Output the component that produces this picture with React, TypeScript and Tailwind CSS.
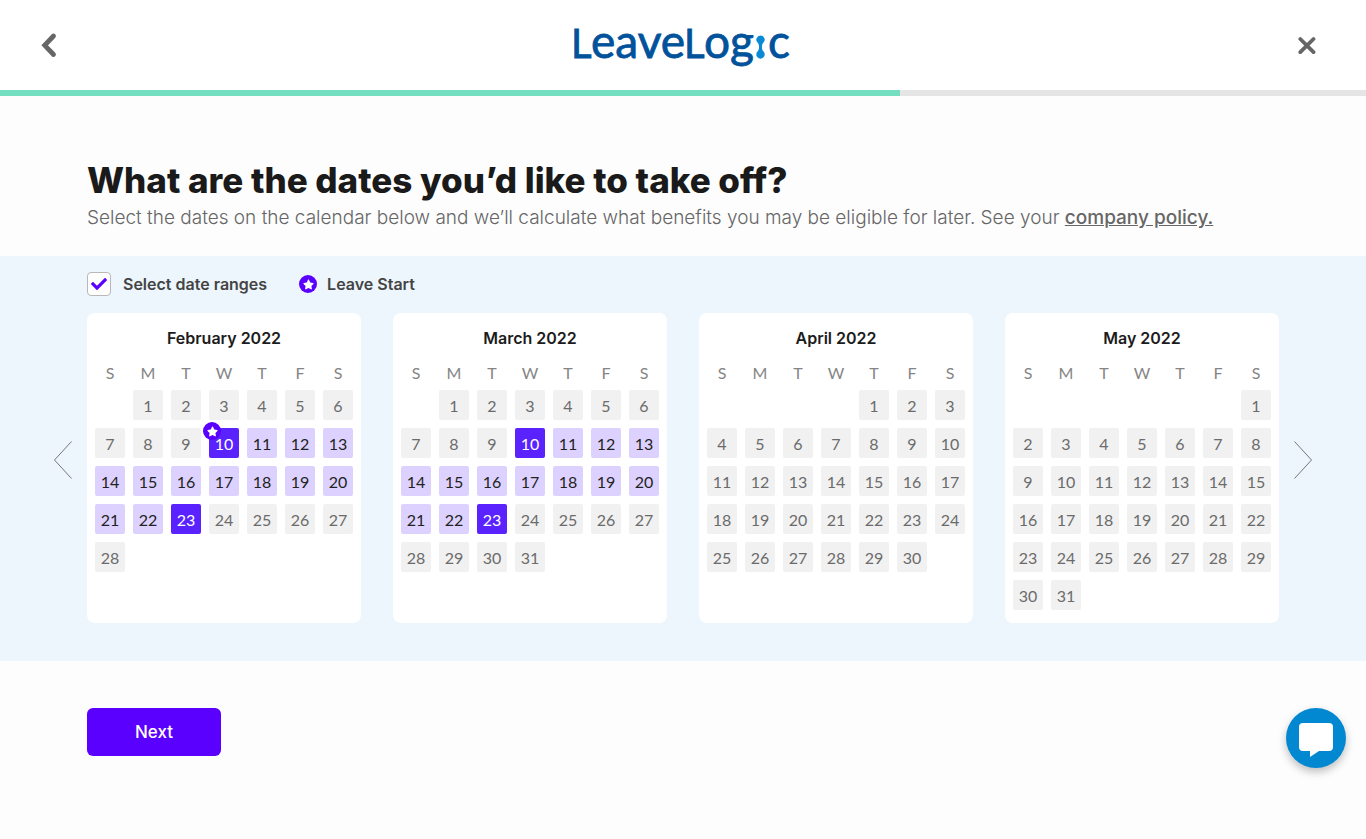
import React, { useState } from 'react';
import { FaCheck, FaStar } from 'react-icons/fa';

interface Month {
  name: string;
  offset: number;
  days: number;
  range?: [number, number];
  leaveStart?: number;
}

const months: Month[] = [
  { name: 'February 2022', offset: 1, days: 28, range: [10, 23], leaveStart: 10 },
  { name: 'March 2022', offset: 1, days: 31, range: [10, 23] },
  { name: 'April 2022', offset: 4, days: 30 },
  { name: 'May 2022', offset: 6, days: 31 },
];

const weekdays = ['S', 'M', 'T', 'W', 'T', 'F', 'S'];

const StarBadge: React.FC<{ className?: string }> = ({ className = '' }) => (
  <span className={`flex h-[18px] w-[18px] items-center justify-center rounded-full bg-[#5a00ff] text-white ${className}`}>
    <FaStar size={11} />
  </span>
);

const Logo: React.FC = () => (
  <svg width="232" height="66" viewBox="0 0 232 66" role="img" aria-label="LeaveLogic" className="font-['Lato',sans-serif]">
    <g fill="#00529b" stroke="#00529b" strokeWidth="0.8" fontSize="46">
      <text x="4" y="46" fontSize="40">L</text>
      <text x="24" y="46">eave</text>
      <text x="117" y="46" fontSize="40">L</text>
      <text x="137" y="46">og</text>
      <text x="201" y="46">c</text>
    </g>
    <path
      d="M193.500 23.500a4.200 4.200 0 0 1 2.800 7.300c-1.800 1.900-1.800 6.600 0 8.500a4.200 4.200 0 1 1-5.600 0c1.800-1.900 1.800-6.600 0-8.500A4.200 4.200 0 0 1 193.500 23.500Z"
      fill="#0a8ad4"
    />
  </svg>
);

const dayStyle = (month: Month, day: number) => {
  if (!month.range || day < month.range[0] || day > month.range[1]) {
    return 'bg-[#f1f1f1] text-[#6b6b6b]';
  }
  if (day === month.range[0] || day === month.range[1]) {
    return 'bg-[#5a22ff] text-white';
  }
  return 'bg-[#ddd2ff] text-[#222222]';
};

const Calendar: React.FC<{ month: Month }> = ({ month }) => (
  <div className="rounded-lg bg-white pt-[13px] pb-[5px]">
    <h2 className="mb-1.5 text-center text-base leading-6 font-semibold text-[#1c1c1c]">{month.name}</h2>
    <table className="w-full table-fixed border-separate border-spacing-2 font-['Lato',sans-serif]">
      <thead>
        <tr>
          {weekdays.map((day, i) => (
            <th key={i} className="p-0 text-base leading-[18px] font-normal text-[#858585]">{day}</th>
          ))}
        </tr>
      </thead>
      <tbody>
        {[0, 1, 2, 3, 4, 5].map((week) => (
          <tr key={week}>
            {weekdays.map((_, i) => {
              const day = week * 7 + i - month.offset + 1;
              return (
                <td key={i} className="h-[30px] p-0">
                  {day > 0 && day <= month.days && (
                    <button className={`relative block h-[30px] w-full rounded-xs pt-0.5 text-base leading-7 ${dayStyle(month, day)}`}>
                      {day === month.leaveStart && <StarBadge className="absolute -top-1.5 -left-1.5" />}
                      {day}
                    </button>
                  )}
                </td>
              );
            })}
          </tr>
        ))}
      </tbody>
    </table>
  </div>
);

const App: React.FC = () => {
  const [ranges, setRanges] = useState(true);

  return (
    <div className="min-h-screen bg-[#fdfdfd] font-['Inter',sans-serif]">
      <header className="grid h-[90px] grid-cols-[1fr_auto_1fr] items-center bg-white px-10">
        <button aria-label="Back" className="justify-self-start text-[#666666]">
          <svg width="18" height="26" viewBox="0 0 18 26" fill="none" stroke="currentColor" strokeWidth="4.800" strokeLinecap="round">
            <path d="M13.500 4 4.700 13.300l8.800 9.200" />
          </svg>
        </button>
        <Logo />
        <button aria-label="Close" className="mr-2.5 justify-self-end text-[#666666]">
          <svg width="18" height="18" viewBox="0 0 18 18" fill="none" stroke="currentColor" strokeWidth="3.800" strokeLinecap="round">
            <path d="m2.300 3 13.200 13.200M15.500 3 2.300 16.200" />
          </svg>
        </button>
      </header>
      <div className="h-1.5 bg-[#e5e5e5]">
        <div className="h-full w-[65.9%] bg-[#73dfc0]" />
      </div>

      <main>
        <div className="mx-auto max-w-[1192px] pt-16 pb-6">
          <h1 className="text-[35px] leading-10 font-extrabold text-[#1a1a1a]">What are the dates you’d like to take off?</h1>
          <p className="mt-1 text-[19px] leading-7 font-light text-[#666666]">
            Select the dates on the calendar below and we’ll calculate what benefits you may be eligible for later. See your{' '}
            <a href="#" className="font-medium underline">company policy.</a>
          </p>
        </div>

        <section className="bg-[#edf6fd] pt-4 pb-[38px]">
          <div className="mx-auto mb-[17px] flex max-w-[1192px] items-center text-base leading-6 font-semibold text-[#444444]">
            <label className="flex items-center gap-3">
              <span className="relative flex h-6 w-6 items-center justify-center">
                <input
                  type="checkbox"
                  checked={ranges}
                  onChange={(e) => setRanges(e.target.checked)}
                  className="h-6 w-6 appearance-none rounded border border-[#b8b8b8] bg-white"
                />
                {ranges && <FaCheck size={16} className="pointer-events-none absolute text-[#5a00ff]" />}
              </span>
              Select date ranges
            </label>
            <div className="ml-8 flex items-center gap-2.5">
              <StarBadge />
              Leave Start
            </div>
          </div>
          <div className="flex items-center justify-center gap-[15px]">
            <button aria-label="Previous months" className="mb-4 shrink-0">
              <svg width="18" height="38" viewBox="0 0 18 38" fill="none" stroke="#555555" strokeWidth="0.800">
                <path d="M17.500.5.500 19l17 18.500" />
              </svg>
            </button>
            <div className="grid w-full max-w-[1192px] grid-cols-4 gap-8">
              {months.map((month) => (
                <Calendar key={month.name} month={month} />
              ))}
            </div>
            <button aria-label="Next months" className="mb-4 shrink-0">
              <svg width="18" height="38" viewBox="0 0 18 38" fill="none" stroke="#555555" strokeWidth="0.800">
                <path d="m.5.500 17 18.500-17 18.500" />
              </svg>
            </button>
          </div>
        </section>

        <div className="mx-auto max-w-[1192px] pt-[47px] pb-12">
          <button className="h-12 rounded-md bg-[#5a00ff] px-12 pt-0.5 text-[17px] font-medium text-white">Next</button>
        </div>
      </main>

      <button
        aria-label="Open chat"
        className="fixed right-5 bottom-[71px] flex h-15 w-15 items-center justify-center rounded-full bg-[#0288d1] shadow-[0_4px_8px_rgba(0,0,0,0.25)]"
      >
        <svg width="34" height="34" viewBox="0 0 34 34" fill="white" className="mt-1">
          <path d="M4 0h26a4 4 0 0 1 4 4v20a4 4 0 0 1-4 4H20l-9 6V28H4a4 4 0 0 1-4-4V4a4 4 0 0 1 4-4Z" />
        </svg>
      </button>
    </div>
  );
};

export default App;
